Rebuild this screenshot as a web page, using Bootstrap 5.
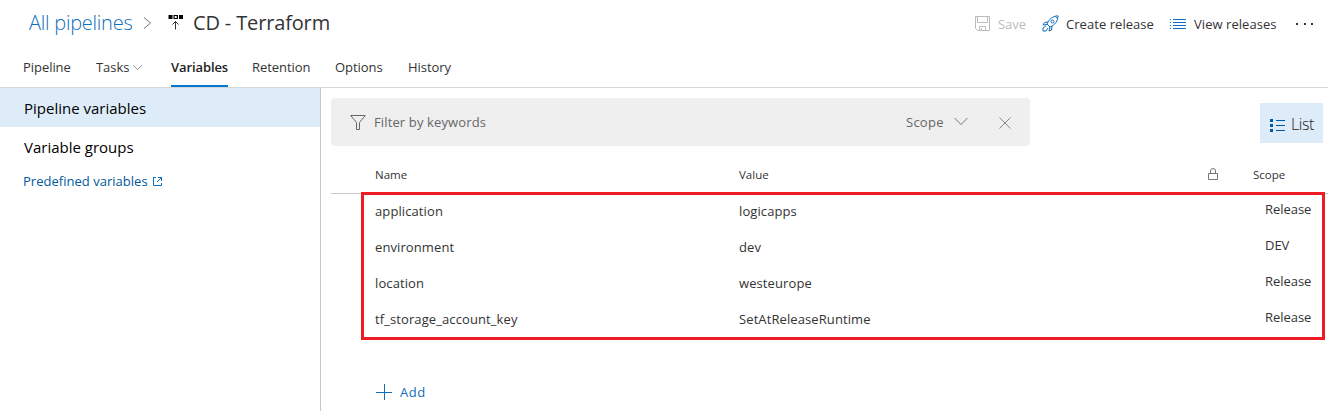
<!DOCTYPE html>
<html lang="en">
<head>
<meta charset="utf-8">
<title>CD - Terraform</title>
<link href="https://cdn.jsdelivr.net/npm/bootstrap@5.3.0/dist/css/bootstrap.min.css" rel="stylesheet">
<style>
body{font-family:"Open Sans","Noto Sans",sans-serif;font-size:13px;line-height:20px;color:#333;background:#fff;height:411px;overflow:hidden;letter-spacing:-.05px}
a{text-decoration:none;color:#005a9e}
svg{display:block;flex:none}
.topline{height:48px;padding-left:29px}
.crumb{font-size:20px;width:103px;font-weight:300;color:#106ebe;letter-spacing:-.25px;margin-top:-3px}
.crumb-arrow{margin:-3px 0 0 11px}
.stage-icon{margin:-4px 0 0 16px}
.title{font-size:20px;letter-spacing:-.15px;color:#333;margin:-3px 0 0 9px}
.tools{margin-top:-1px}
.t-save{width:52px;padding-left:8px;color:#bbb}
.t-create{width:111px;padding-left:7px;letter-spacing:.05px}
.t-view{width:109px;padding-left:8px;letter-spacing:.05px}
.tabs{height:40px;border-bottom:1px solid #d6d6d6;padding-left:23px}
.tabs .nav-link{padding:0;height:39px;line-height:39px;color:#333}
.tabs .nav-link.active{font-weight:600;color:#222;border-bottom:2px solid #0078d4;letter-spacing:-.1px}
.side{width:321px;height:323px;border-right:1px solid #c8c8c8}
.side-item{height:39px;line-height:41px;padding-left:24px;font-size:15px;letter-spacing:0;color:#000}
.side-item.active{background:#deecf9}
.predef{padding:5px 0 0 23px}
.predef span{width:130px;letter-spacing:.02px}
.filterbar{width:699px;height:48px;background:#efefef;border-radius:4px;color:#666;padding-left:19px}
.t-filter{margin-left:8px;width:532px;letter-spacing:.13px}
.t-scope{width:48px;letter-spacing:.25px}
.listbtn{width:63px;height:40px;background:#deecf9;font-size:16px;font-weight:300;color:#222;padding-left:10px;letter-spacing:-.4px;margin:5px 0 0 230px}
.main{padding:10px 0 0 10px}
.cols{display:grid;align-items:center}
.heads{grid-template-columns:364px 469px 45px 1fr;height:48px;padding:10px 0 0 44px;border-bottom:1px solid #c8c8c8;font-size:11.5px;letter-spacing:0}
.heads svg{margin-top:-2px}
.marked{position:relative;width:964px;height:148px;margin:-2px 0 0 30px;border:3px solid #ed1c24}
.marked .cols{grid-template-columns:364px 526px 1fr;height:36px;padding:0 0 4px 11px;letter-spacing:.1px}
.marked .scope{margin-top:-4px;letter-spacing:-.05px}
.add{margin:42px 0 0 45px;color:#106ebe;letter-spacing:.5px}
</style>
</head>
<body>
<header class="topline d-flex align-items-center">
  <a href="#" class="crumb text-nowrap">All pipelines</a>
  <svg class="crumb-arrow" width="9" height="14" fill="none" stroke="#777"><path d="M1 1.500 7.500 7 1 12.500"/></svg>
  <svg class="stage-icon" width="16" height="17"><path fill="#000" d="M.5 1h4v4h-4zM11 1h4v4h-4zM5.500 1h4.500v4H5.500z"/><path fill="#fff" d="M6.700 2h2v2h-2z"/><path fill="none" stroke="#333" d="M7.500 15.500V7.500M4.500 10.500l3-3 3 3"/></svg>
  <span class="title text-nowrap">CD - Terraform</span>
  <div class="tools d-flex align-items-center ms-auto text-nowrap">
    <svg width="15" height="15" fill="none" stroke="#bbb"><path d="M.5.5h14v14h-12l-2-2zM2.500.5v6h10v-6M4.500 14.500v-4h6v4M6.500 12v2"/></svg>
    <span class="t-save">Save</span>
    <svg width="17" height="17" fill="none" stroke="#106ebe"><path d="M5 9C7 4 11 1 16 .800 16 6 13 10 8 12L5 9ZM6 7 2.500 7.500 1 10l4-.5M10 11l-.5 4-2.500 1 1-4M13 1l3 3M4 11l-3 2v3h3l2-3"/><circle cx="10.500" cy="6.500" r="1.500"/></svg>
    <span class="t-create">Create release</span>
    <svg width="16" height="12" stroke="#106ebe"><path d="M3 1.500h13M3 4.500h13M3 7.500h13M3 10.500h13M0 1.500h1M0 4.500h1M0 7.500h1M0 10.500h1"/></svg>
    <span class="t-view">View releases</span>
    <svg width="33" height="4" fill="#333"><path d="M1 1h2v2H1zM9 1h2v2H9zM16 1h2v2h-2z"/></svg>
  </div>
</header>
<nav class="tabs nav flex-nowrap text-nowrap">
  <a class="nav-link" href="#" style="width:73px">Pipeline</a>
  <a class="nav-link d-flex align-items-center" href="#" style="width:75px"><span style="width:36px">Tasks</span><svg width="11" height="7" fill="none" stroke="#999"><path d="m1 1 4.500 4.500L10 1"/></svg></a>
  <a class="nav-link active" href="#" style="width:57px;margin-right:24px">Variables</a>
  <a class="nav-link" href="#" style="width:83px">Retention</a>
  <a class="nav-link" href="#" style="width:73px">Options</a>
  <a class="nav-link" href="#">History</a>
</nav>
<div class="d-flex">
  <aside class="side flex-shrink-0">
    <div class="side-item active">Pipeline variables</div>
    <div class="side-item">Variable groups</div>
    <a href="#" class="predef d-flex align-items-center"><span>Predefined variables</span><svg width="9" height="9" fill="none" stroke="#106ebe"><path d="M3 .5H.5v8h8V6M5 .5h3.500V4M8.500.5 4 5"/></svg></a>
  </aside>
  <main class="main flex-grow-1">
    <div class="d-flex">
      <div class="filterbar d-flex align-items-center">
        <svg width="16" height="15" fill="none" stroke="#666"><path d="M.7.5h14.600L9.500 7.500v7h-3v-7z"/></svg>
        <span class="t-filter">Filter by keywords</span>
        <span class="t-scope">Scope</span>
        <svg width="14" height="9" fill="none" stroke="#777" style="margin-top:-2px"><path d="m.5 1 6.500 6.500L13.500 1"/></svg>
        <svg width="12" height="12" style="margin:2px 0 0 31px" fill="none" stroke="#888"><path d="m.5.5 11 11m0-11-11 11"/></svg>
      </div>
      <div class="listbtn d-flex align-items-center">
        <svg width="15" height="13" style="margin-top:4px" fill="#005a9e"><path d="M0 0h3v3H0zM0 5h3v3H0zM0 10h3v3H0zM6 1h9v1H6zM6 6h9v1H6zM6 11h9v1H6z"/></svg>
        <span style="margin:2px 0 0 6px">List</span>
      </div>
    </div>
    <div class="cols heads"><span>Name</span><span>Value</span><svg width="10" height="12" fill="none" stroke="#777"><path d="M.5 5.500h9v6h-9zM2.500 5.500V3a2.500 2.500 0 0 1 5 0v2.500"/></svg><span>Scope</span></div>
    <div class="marked">
      <div class="cols"><span>application</span><span>logicapps</span><span class="scope">Release</span></div>
      <div class="cols"><span>environment</span><span>dev</span><span class="scope">DEV</span></div>
      <div class="cols"><span>location</span><span>westeurope</span><span class="scope">Release</span></div>
      <div class="cols"><span>tf_storage_account_key</span><span>SetAtReleaseRuntime</span><span class="scope">Release</span></div>
    </div>
    <a href="#" class="add d-flex align-items-center"><svg width="16" height="16" fill="none" stroke="#106ebe"><path d="M8.500 0v16M0 8.500h16"/></svg><span style="margin-left:8px">Add</span></a>
  </main>
</div>
<script src="https://cdn.jsdelivr.net/npm/bootstrap@5.3.0/dist/js/bootstrap.bundle.min.js"></script>
</body>
</html>
